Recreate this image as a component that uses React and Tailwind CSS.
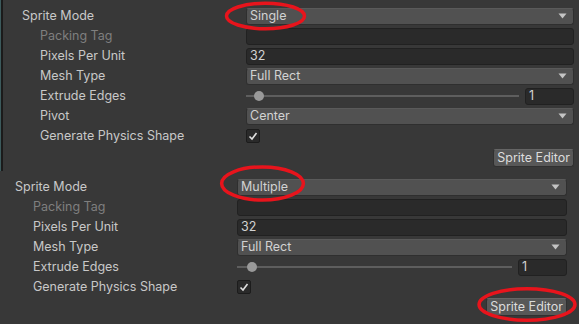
import React from "react";

const font = { fontFamily: "Inter, 'Noto Sans', sans-serif" };

function Arrow() {
  return (
    <svg width="9" height="6" viewBox="0 0 9 6" className="shrink-0">
      <polygon points="0.5,0.5 8.5,0.5 4.5,5.5" fill="#c4c4c4" />
    </svg>
  );
}

function Dropdown({ value }) {
  return (
    <div className="flex-1 h-[17px] bg-[#515151] border border-[#2f2f2f] border-t-[#5a5a5a] rounded-[3px] flex items-center justify-between pl-[3px] pr-[6px] text-[#d2d2d2]">
      <span>{value}</span>
      <Arrow />
    </div>
  );
}

function TextField({ value }) {
  return (
    <div className="flex-1 h-[17px] bg-[#2a2a2a] border border-[#212121] rounded-[3px] flex items-center pl-[3px] text-[#d2d2d2]">
      {value}
    </div>
  );
}

function Row({ label, indent, disabled, labelW, children }) {
  return (
    <div className="flex items-center h-[20px]">
      <div
        className={
          "shrink-0 " +
          (indent ? "pl-[18px] " : "") +
          (disabled ? "text-[#7f7f7f]" : "text-[#c8c8c8]")
        }
        style={{ width: labelW }}
      >
        {label}
      </div>
      <div className="flex-1 flex items-center">{children}</div>
    </div>
  );
}

function Slider({ knob }) {
  return (
    <div className="flex-1 flex items-center gap-[6px]">
      <div className="flex-1 relative h-[10px] flex items-center">
        <div className="w-full h-[2px] bg-[#5e5e5e]" />
        <div className={"absolute top-0 w-[10px] h-[10px] rounded-full bg-[#999999] " + knob} />
      </div>
      <div className="w-[49px] h-[17px] bg-[#2a2a2a] border border-[#212121] rounded-[3px] flex items-center pl-[3px] text-[#d2d2d2]">
        1
      </div>
    </div>
  );
}

function Check() {
  return (
    <div className="w-[14px] h-[14px] bg-[#2a2a2a] border border-[#1c1c1c] rounded-[2px] flex items-center justify-center">
      <svg width="10" height="10" viewBox="0 0 10 10">
        <polyline points="1.5,5.5 4,8 8.5,2" fill="none" stroke="#e0e0e0" strokeWidth="1.6" />
      </svg>
    </div>
  );
}

function Panel({ mode, labelW, knob }) {
  return (
    <>
      <Row label="Sprite Mode" labelW={labelW}>
        <Dropdown value={mode} />
      </Row>
      <Row label="Packing Tag" indent disabled labelW={labelW}>
        <TextField value="" />
      </Row>
      <Row label="Pixels Per Unit" indent labelW={labelW}>
        <TextField value="32" />
      </Row>
      <Row label="Mesh Type" indent labelW={labelW}>
        <Dropdown value="Full Rect" />
      </Row>
      <Row label="Extrude Edges" indent labelW={labelW}>
        <Slider knob={knob} />
      </Row>
      {mode === "Single" && (
        <Row label="Pivot" indent labelW={labelW}>
          <Dropdown value="Center" />
        </Row>
      )}
      <Row label="Generate Physics Shape" indent labelW={labelW}>
        <Check />
      </Row>
    </>
  );
}

function Ellipse({ className }) {
  return (
    <svg className={"absolute pointer-events-none " + className} viewBox="0 0 100 40" preserveAspectRatio="none">
      <ellipse cx="50" cy="20" rx="47" ry="17" fill="none" stroke="#e8141c" strokeWidth="3.5" vectorEffect="non-scaling-stroke" />
    </svg>
  );
}

function Button() {
  return (
    <div className="h-[18px] px-[3px] bg-[#585858] border border-[#303030] border-t-[#656565] rounded-[3px] flex items-center text-[#dcdcdc]">
      Sprite Editor
    </div>
  );
}

export default function App() {
  return (
    <div className="relative w-[579px] h-[324px] bg-[#383838] overflow-hidden text-[12.5px] leading-none" style={font}>
      <div className="h-[171px] flex">
        <div className="w-[1px] bg-[#3c5a5c]" />
        <div className="w-[2px] bg-[#1b1b1b]" />
        <div className="flex-1 pl-[19px] pr-[5px] pt-[6px] flex flex-col">
          <Panel mode="Single" labelW={224} knob="left-[8px]" />
          <div className="flex justify-end mt-[3px]">
            <Button />
          </div>
        </div>
      </div>
      <div className="pl-[15px] pr-[12px] pt-[6px] flex flex-col">
        <Panel mode="Multiple" labelW={222} knob="left-[10px]" />
        <div className="flex justify-end mt-[1px]">
          <Button />
        </div>
      </div>
      <Ellipse className="left-[224px] top-[1px] w-[83px] h-[30px]" />
      <Ellipse className="left-[219px] top-[164px] w-[87px] h-[39px]" />
      <Ellipse className="left-[476px] top-[286px] w-[102px] h-[37px]" />
    </div>
  );
}
